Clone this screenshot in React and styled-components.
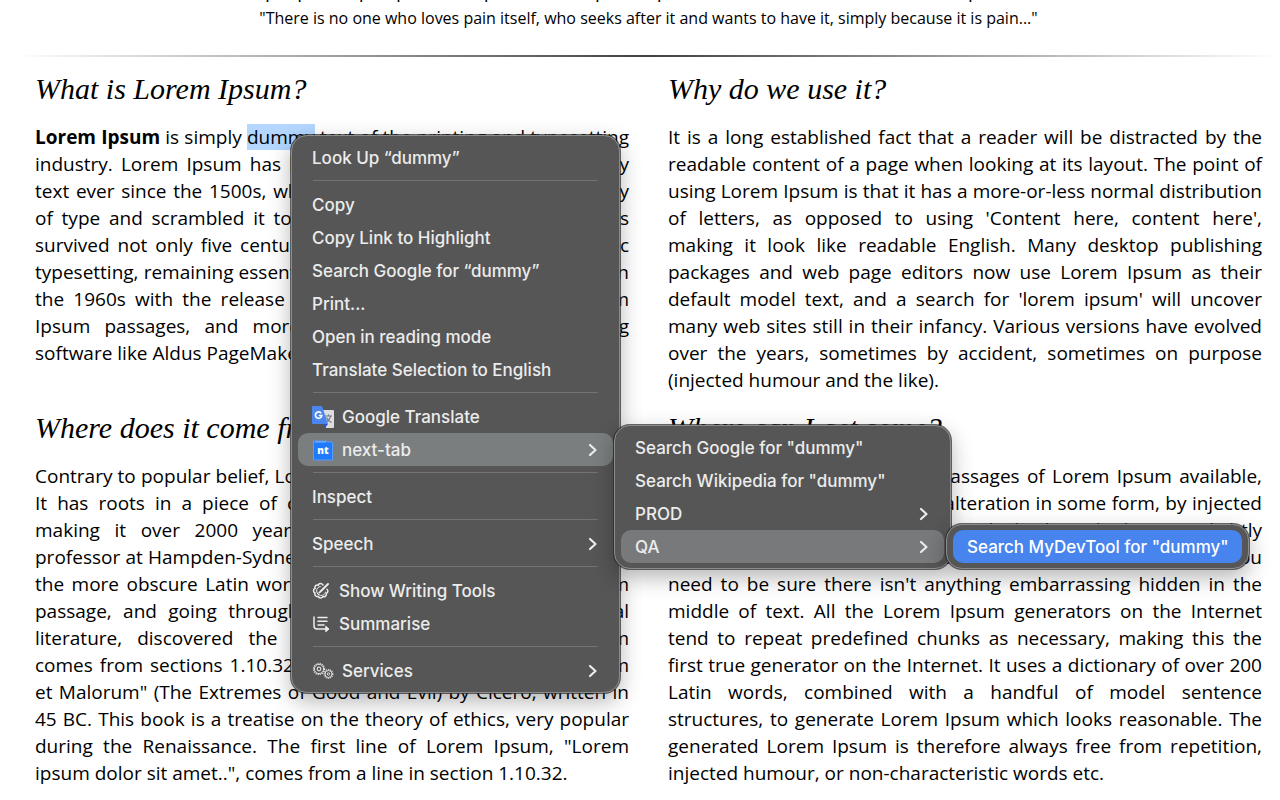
import React from 'react';
import styled, { createGlobalStyle } from 'styled-components';

const GlobalStyle = createGlobalStyle`
  * {
    box-sizing: border-box;
  }

  body {
    margin: 0;
    background: #fff;
    color: #000;
    font-family: "Open Sans", "Noto Sans", sans-serif;
    overflow: hidden;
  }
`;

const Page = styled.main`
  position: relative;
  min-height: 100vh;
`;

const Header = styled.header`
  display: flex;
  flex-direction: column;
  justify-content: flex-end;
  align-items: center;
  gap: 3px;
  height: 30px;
  padding-left: 17px;
  overflow: hidden;
  line-height: 24px;
  white-space: nowrap;
`;

const Motto = styled.p`
  flex: none;
  margin: 0;
  font-size: ${(props) => props.size || 16}px;
`;

const Divider = styled.hr`
  height: 2px;
  margin: 25px 0 0 14px;
  border: 0;
  background: linear-gradient(to right, rgba(0, 0, 0, 0), rgba(0, 0, 0, 0.75), rgba(0, 0, 0, 0));
`;

const Columns = styled.div`
  display: grid;
  grid-template-columns: 1fr 1fr;
  column-gap: 39px;
  row-gap: 14px;
  padding: 12px 18px 0 35px;
`;

const Title = styled.h2`
  margin: 0 0 15px;
  font-family: "Liberation Serif", serif;
  font-size: 30px;
  font-style: italic;
  font-weight: 400;
  line-height: 40px;
`;

const Text = styled.p`
  margin: 0;
  font-size: 19px;
  line-height: 27px;
  text-align: justify;
`;

const Selected = styled.mark`
  background: #b3d7ff;
  color: inherit;
`;

const Menu = styled.div`
  position: absolute;
  top: ${(props) => props.top}px;
  left: ${(props) => props.left}px;
  width: ${(props) => props.width}px;
  padding: 5px 6px;
  border: 1px solid #8c8c8c;
  border-radius: 16px;
  background: #565656;
  box-shadow: 0 0 0 1px rgba(40, 40, 40, 0.7), 0 8px 22px rgba(0, 0, 0, 0.3);
`;

const Item = styled.button`
  display: flex;
  align-items: center;
  gap: ${(props) => props.gap || 8}px;
  width: 100%;
  height: 33px;
  padding: 0 14px;
  border: 0;
  border-radius: 10px;
  background: ${(props) => props.bg || 'transparent'};
  color: ${(props) => (props.active ? '#fff' : '#ececec')};
  font-family: Inter, sans-serif;
  font-size: 17px;
  font-weight: 500;
  line-height: 24px;
  text-align: left;
  white-space: nowrap;

  svg {
    flex: none;
  }
`;

const Label = styled.span`
  flex: 1;
`;

const Separator = styled.hr`
  height: 1px;
  margin: 6px 15px 7px;
  border: 0;
  background: #737373;
`;

const Chevron = () => (
  <svg width="12" height="16" viewBox="0 0 12 16" fill="none" stroke="#ececec" strokeWidth="2.2" strokeLinecap="round" strokeLinejoin="round">
    <path d="M3 3l5.500 5L3 13" />
  </svg>
);

const TranslateIcon = () => (
  <svg width="22" height="22" viewBox="0 0 22 22">
    <path d="M9 4h12a1 1 0 0 1 1 1v16a1 1 0 0 1-1 1h-7z" fill="#dedede" />
    <path d="M13 10h7M16.500 8.500v1.500M18.500 10c-.5 3-2.500 5-5 6.500M14.500 11.500c1 2.500 2.500 4 5 5" fill="none" stroke="#6f7c84" strokeWidth="1.200" />
    <path d="M11 18h5l-3 4z" fill="#2a56c6" />
    <path d="M1 0h9l6 18H1a1 1 0 0 1-1-1V1a1 1 0 0 1 1-1z" fill="#4b86ee" />
    <path d="M9.200 7.200A3.200 3.200 0 1 0 9.800 9.500H6.800" fill="none" stroke="#fff" strokeWidth="1.700" />
  </svg>
);

const NextTabIcon = () => (
  <svg width="22" height="22" viewBox="0 0 22 22">
    <path d="M1.500 2h12.500l1 1h5.500v18h-19z" fill="#1f7bfb" stroke="#5b9cf5" />
    <path d="M3 3h11" stroke="#8fbcfa" />
    <text x="11" y="15" fill="#fff" fontFamily="Open Sans, sans-serif" fontSize="10" fontWeight="800" textAnchor="middle">nt</text>
  </svg>
);

// scalloped dial with a pencil across it
const WritingIcon = () => (
  <svg width="18" height="18" viewBox="0 0 18 18" fill="none" stroke="#ececec" strokeWidth="1.500" strokeLinecap="round">
    <path d="M11 3C9.500 .8 7 1 6.200 3.200 4 2.600 2.300 4.200 3 6.500 1 7.300 1 10 3 11c-.8 2 .9 4 3.200 3.400.8 2 3.600 2.200 4.600.2 2 .7 4-.9 3.600-3.200 1.800-.9 1.900-3 .6-4.100" />
    <path d="M8.500 4.500a4.500 4.500 0 1 0 5 5.500" strokeWidth="1" />
    <path d="M8.500 9.500L16 2" strokeWidth="2" />
    <path d="M7 11l1-1" />
  </svg>
);

const SummariseIcon = () => (
  <svg width="18" height="18" viewBox="0 0 18 18" fill="none" stroke="#ececec" strokeWidth="1.500" strokeLinecap="round" strokeLinejoin="round">
    <path d="M2 2v9a3 3 0 0 0 3 3h10" />
    <path d="M6 2.500h9M6 6.200h9M6 9.900h6" />
    <path d="M14 11.500l3 2.500-3 2.500z" fill="#ececec" strokeWidth="1" />
  </svg>
);

const ServicesIcon = () => (
  <svg width="22" height="18" viewBox="0 0 22 18" fill="none" stroke="#dcdcdc">
    <circle cx="7" cy="7" r="5.500" strokeWidth="1.400" strokeDasharray="1.160 1.000" />
    <circle cx="7" cy="7" r="4.600" />
    <circle cx="7" cy="7" r="1.800" strokeWidth="1.200" />
    <circle cx="16.500" cy="12" r="4.300" strokeWidth="1.300" strokeDasharray="1.100 0.830" />
    <circle cx="16.500" cy="12" r="3.500" />
    <circle cx="16.500" cy="12" r="1.200" />
  </svg>
);

const MenuItem = ({ icon, label, submenu, bg, active, gap }) => (
  <Item
    type="button"
    role="menuitem"
    aria-haspopup={submenu ? 'menu' : undefined}
    bg={bg}
    active={active}
    gap={gap}
  >
    {icon}
    <Label>{label}</Label>
    {submenu && <Chevron />}
  </Item>
);

const ContextMenu = () => (
  <Menu role="menu" aria-label="Page" top={135} left={291} width={329}>
    <MenuItem label="Look Up “dummy”" />
    <Separator />
    <MenuItem label="Copy" />
    <MenuItem label="Copy Link to Highlight" />
    <MenuItem label="Search Google for “dummy”" />
    <MenuItem label="Print..." />
    <MenuItem label="Open in reading mode" />
    <MenuItem label="Translate Selection to English" />
    <Separator />
    <MenuItem icon={<TranslateIcon />} label="Google Translate" />
    <MenuItem icon={<NextTabIcon />} label="next-tab" bg="#7b7e7f" submenu />
    <Separator />
    <MenuItem label="Inspect" />
    <Separator />
    <MenuItem label="Speech" submenu />
    <Separator />
    <MenuItem icon={<WritingIcon />} label="Show Writing Tools" gap={9} />
    <MenuItem icon={<SummariseIcon />} label="Summarise" gap={9} />
    <Separator />
    <MenuItem icon={<ServicesIcon />} label="Services" submenu />
  </Menu>
);

const NextTabMenu = () => (
  <Menu role="menu" aria-label="next-tab" top={425} left={614} width={337}>
    <MenuItem label={'Search Google for "dummy"'} />
    <MenuItem label={'Search Wikipedia for "dummy"'} />
    <MenuItem label="PROD" submenu />
    <MenuItem label="QA" bg="#78797a" submenu />
  </Menu>
);

const QaMenu = () => (
  <Menu role="menu" aria-label="QA" top={524} left={946} width={303}>
    <MenuItem label={'Search MyDevTool for "dummy"'} bg="#4784ee" active />
  </Menu>
);

const App = () => (
  <>
    <GlobalStyle />
    <Page>
      <Header>
        <Motto size={19}>
          "Neque porro quisquam est qui dolorem ipsum quia dolor sit amet, consectetur, adipisci velit..."
        </Motto>
        <Motto>
          "There is no one who loves pain itself, who seeks after it and wants to have it, simply because it is pain..."
        </Motto>
      </Header>
      <Divider />
      <Columns>
        <section>
          <Title>What is Lorem Ipsum?</Title>
          <Text>
            <strong>Lorem Ipsum</strong> is simply <Selected>dummy</Selected> text of the printing and typesetting
            industry. Lorem Ipsum has been the industry's standard dummy text ever since the 1500s, when an unknown
            printer took a galley of type and scrambled it to make a type specimen book. It has survived not only five
            centuries, but also the leap into electronic typesetting, remaining essentially unchanged. It was
            popularised in the 1960s with the release of Letraset sheets containing Lorem Ipsum passages, and more
            recently with desktop publishing software like Aldus PageMaker including versions of Lorem Ipsum.
          </Text>
        </section>
        <section>
          <Title>Why do we use it?</Title>
          <Text>
            It is a long established fact that a reader will be distracted by the readable content of a page when
            looking at its layout. The point of using Lorem Ipsum is that it has a more-or-less normal distribution of
            letters, as opposed to using 'Content here, content here', making it look like readable English. Many
            desktop publishing packages and web page editors now use Lorem Ipsum as their default model text, and a
            search for 'lorem ipsum' will uncover many web sites still in their infancy. Various versions have evolved
            over the years, sometimes by accident, sometimes on purpose (injected humour and the like).
          </Text>
        </section>
        <section>
          <Title>Where does it come from?</Title>
          <Text>
            Contrary to popular belief, Lorem Ipsum is not simply random text. It has roots in a piece of classical
            Latin literature from 45 BC, making it over 2000 years old. Richard McClintock, a Latin professor at
            Hampden-Sydney College in Virginia, looked up one of the more obscure Latin words, consectetur, from a
            Lorem Ipsum passage, and going through the cites of the word in classical literature, discovered the
            undoubtable source. Lorem Ipsum comes from sections 1.10.32 and 1.10.33 of "de Finibus Bonorum et Malorum"
            (The Extremes of Good and Evil) by Cicero, written in 45 BC. This book is a treatise on the theory of
            ethics, very popular during the Renaissance. The first line of Lorem Ipsum, "Lorem ipsum dolor sit
            amet..", comes from a line in section 1.10.32.
          </Text>
        </section>
        <section>
          <Title>Where can I get some?</Title>
          <Text>
            There are many variations of passages of Lorem Ipsum available, but the majority have suffered alteration
            in some form, by injected humour, or randomised words which don't look even slightly believable. If you
            are going to use a passage of Lorem Ipsum, you need to be sure there isn't anything embarrassing hidden in
            the middle of text. All the Lorem Ipsum generators on the Internet tend to repeat predefined chunks as
            necessary, making this the first true generator on the Internet. It uses a dictionary of over 200 Latin
            words, combined with a handful of model sentence structures, to generate Lorem Ipsum which looks
            reasonable. The generated Lorem Ipsum is therefore always free from repetition, injected humour, or
            non-characteristic words etc.
          </Text>
        </section>
      </Columns>
      <ContextMenu />
      <NextTabMenu />
      <QaMenu />
    </Page>
  </>
);

export default App;
